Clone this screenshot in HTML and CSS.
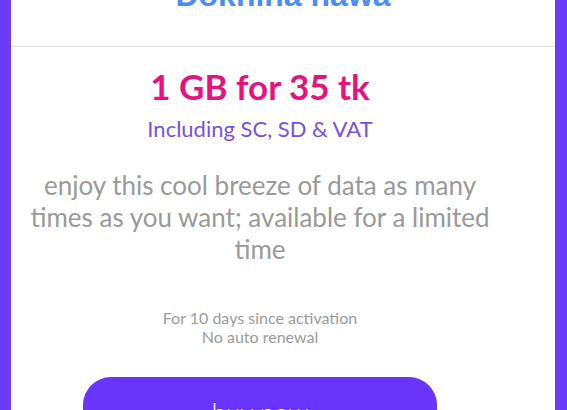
FILE: index.html
```html
<html>
  <head>
    <link rel="stylesheet" href="styles.css">
  </head>
  <body>
    <div class="frame">
      <div class="side"></div>
      <div class="card">
        <div class="card-head">
          <h2 class="pack-name">Dokhina hawa</h2>
        </div>
        <div class="card-body">
          <p class="price">1 GB for 35 tk</p>
          <p class="vat">Including SC, SD &amp; VAT</p>
          <p class="desc">enjoy this cool breeze of data as many times as you want; available for a limited time</p>
          <p class="terms">For 10 days since activation<br>No auto renewal</p>
          <button class="buy">buy now</button>
        </div>
      </div>
      <div class="side"></div>
    </div>
  </body>
</html>
```

FILE: styles.css
```css
* {
  box-sizing: border-box;
}

body {
  margin: 0;
  overflow: hidden;
  font-family: Lato, "Open Sans", sans-serif;
  background: #fff;
}

.frame {
  display: flex;
  height: 410px;
  overflow: hidden;
}

.side {
  width: 11px;
  background-color: #6a3bfa;
}

.side:last-child {
  width: 12px;
}

.card {
  flex: 1;
  background: #fff;
}

.card-head {
  display: flow-root;
  height: 47px;
  border-bottom: 1px solid #e2e2e2;
  text-align: center;
}

.pack-name {
  margin: 0;
  margin-top: -27px;
  font-family: "Liberation Sans", Arial, sans-serif;
  font-size: 32px;
  line-height: 44px;
  font-weight: bold;
  color: #4b8ef0;
}

.card-body {
  padding: 0 50px 0 4px;
  text-align: center;
}

.card-body p {
  margin: 0;
}

.price {
  padding-top: 17px;
  font-size: 35px;
  line-height: 44px;
  font-weight: bold;
  color: #e8127f;
}

.vat {
  margin-top: 8px !important;
  font-size: 22px;
  line-height: 26px;
  color: #7a4fe6;
}

.desc {
  margin-top: 27px !important;
  font-size: 26px;
  line-height: 32px;
  color: #9a9a9a;
}

.terms {
  margin-top: 43px !important;
  font-size: 16px;
  line-height: 19px;
  color: #9b9b9b;
}

.buy {
  display: block;
  width: 354px;
  height: 60px;
  margin: 31px auto 0;
  padding: 10px 0 0;
  border: none;
  border-radius: 28px;
  background-color: #6a35fb;
  color: #fff;
  font-family: Lato, sans-serif;
  font-size: 26px;
  font-weight: 300;
}
```
